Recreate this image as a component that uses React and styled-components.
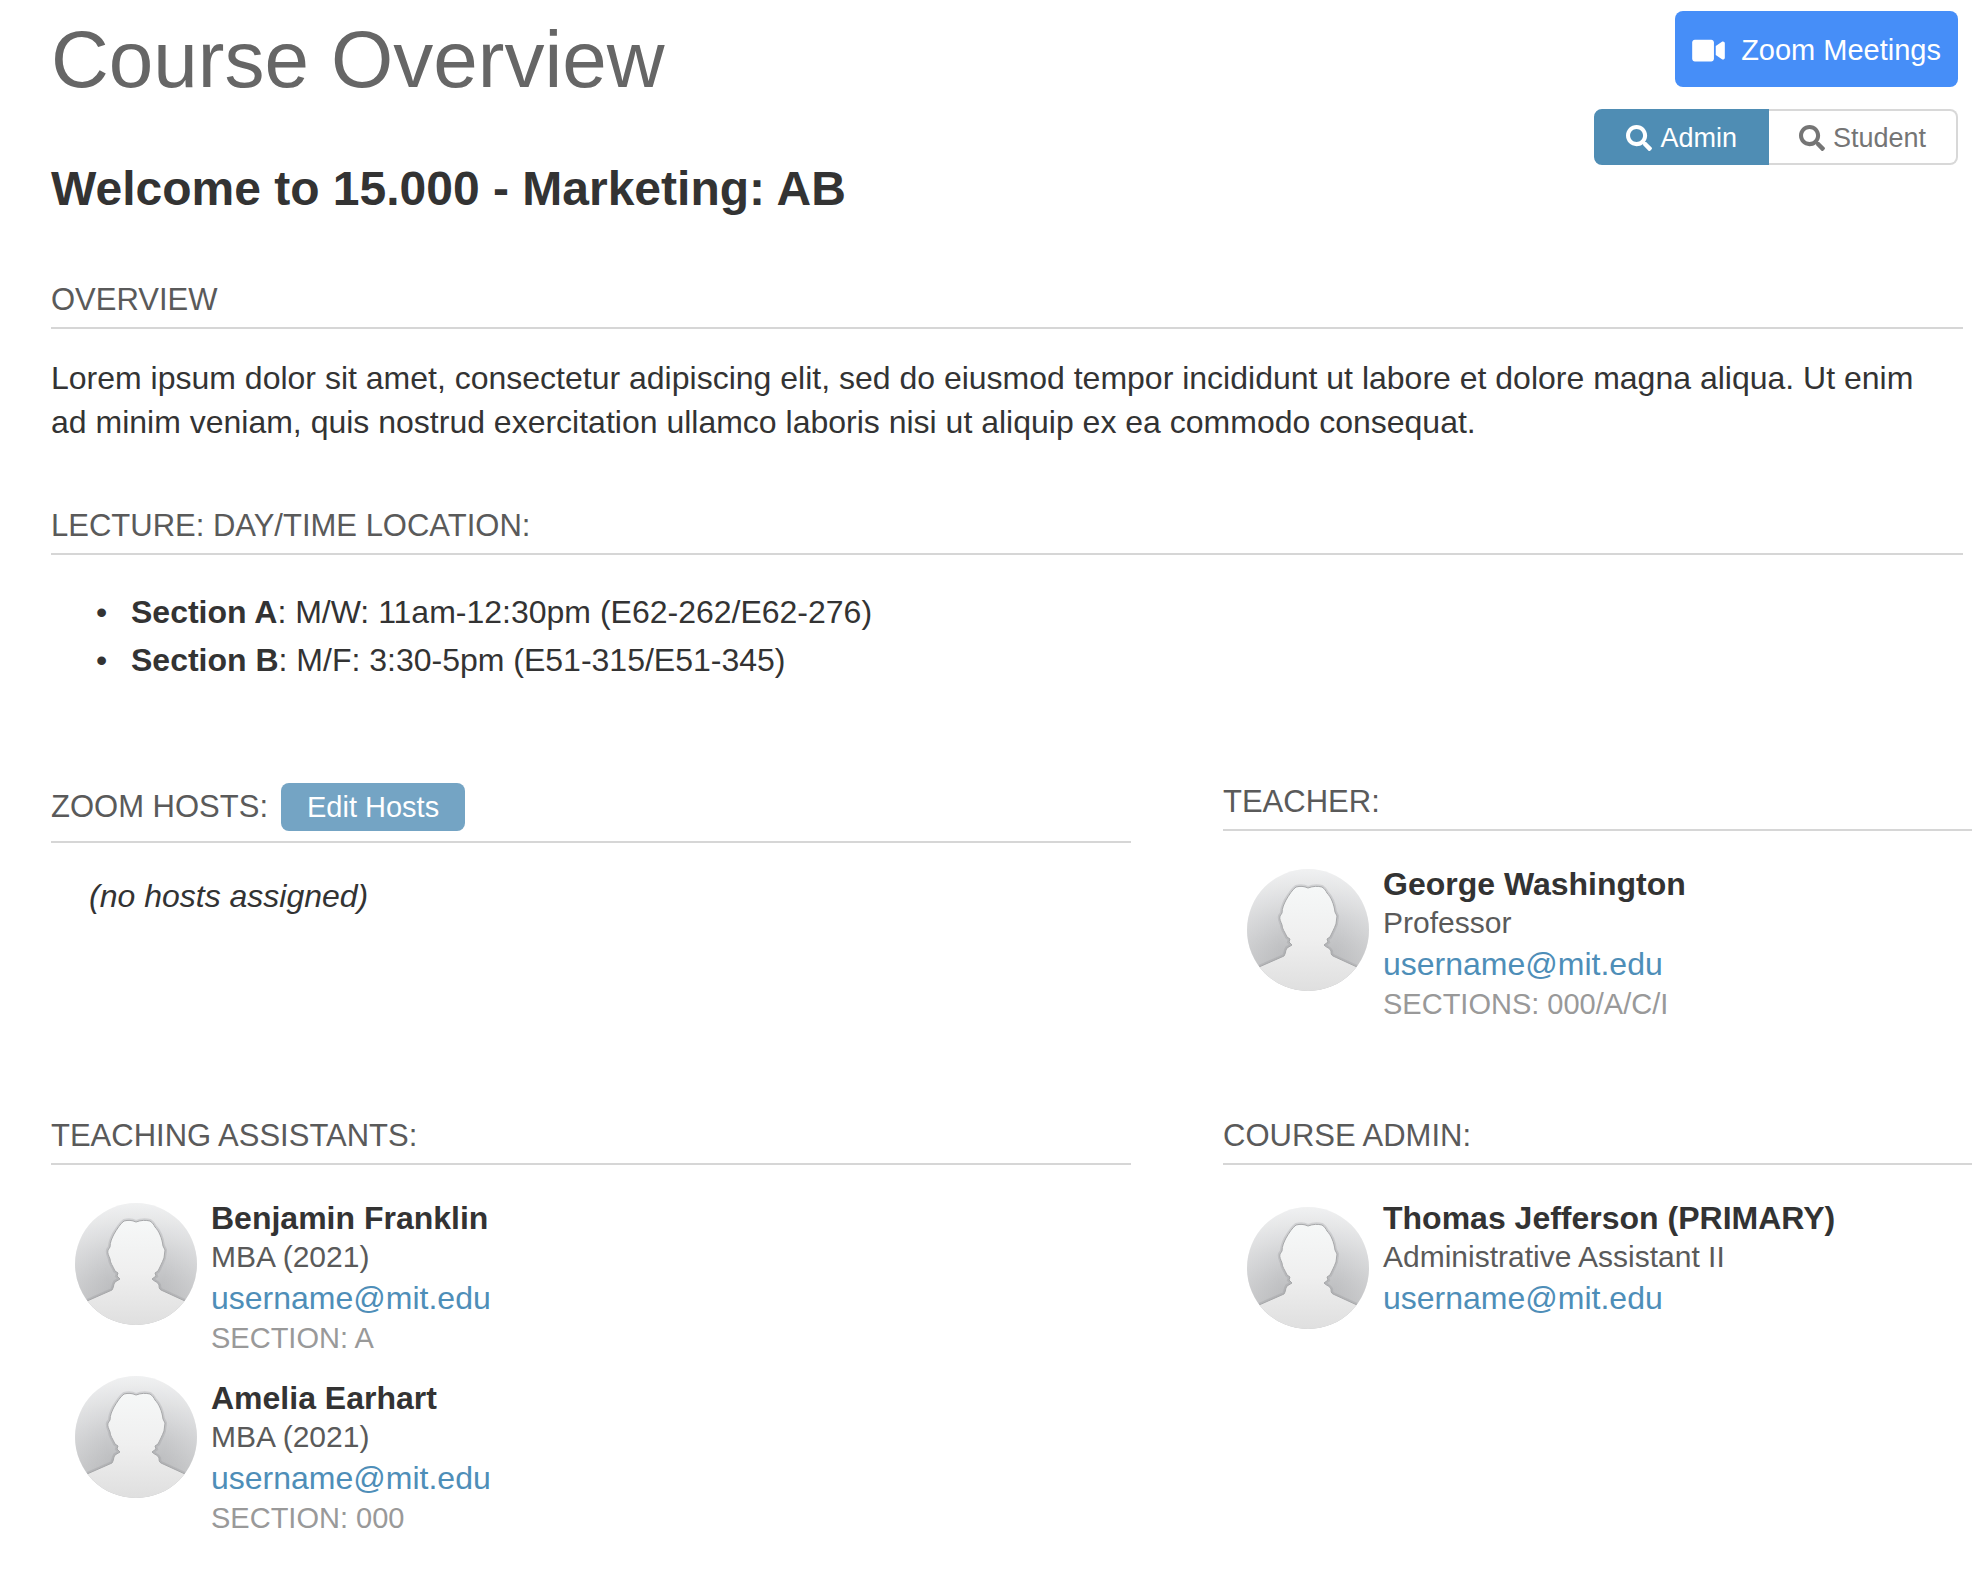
import { useId, useState } from "react";
import styled, { createGlobalStyle } from "styled-components";
import { FaSearch, FaVideo } from "react-icons/fa";

const GlobalStyle = createGlobalStyle`
  * {
    box-sizing: border-box;
  }
  body {
    margin: 0;
    background: #fff;
    color: #333;
    font-family: "Liberation Sans", Arial, Helvetica, sans-serif;
    font-size: 32px;
    line-height: 44px;
    overflow-x: hidden;
  }
  button {
    font-family: inherit;
    cursor: pointer;
  }
`;

const Page = styled.main`
  padding: 11px 0 64px 51px;
`;

const Header = styled.header`
  display: flex;
  justify-content: space-between;
  align-items: flex-start;
  padding-right: 14px;
`;

const Titles = styled.div`
  padding-top: 3px;
`;

const Title = styled.h1`
  margin: 0 0 54px;
  color: #666;
  font-size: 80px;
  font-weight: normal;
  line-height: 92px;
`;

const Welcome = styled.h2`
  margin: 0;
  font-size: 48px;
  line-height: 58px;
`;

const Actions = styled.div`
  display: flex;
  flex-direction: column;
  align-items: flex-end;
  gap: 22px;
`;

const ZoomButton = styled.button`
  display: flex;
  align-items: center;
  gap: 16px;
  height: 76px;
  padding: 2px 17px 0;
  border: none;
  border-radius: 8px;
  background: #468ef8;
  color: #fff;
  font-size: 29px;
`;

const VideoIcon = styled(FaVideo)`
  width: 33px;
  height: 29px;
`;

const ViewSwitch = styled.div`
  display: flex;
`;

const ViewButton = styled.button`
  display: flex;
  align-items: center;
  gap: 8px;
  height: 56px;
  padding: 2px 30px 0;
  border: 2px solid ${(props) => (props.$active ? "#4f8db4" : "#d8d8d8")};
  background: ${(props) => (props.$active ? "#4f8db4" : "#fff")};
  color: ${(props) => (props.$active ? "#fff" : "#757575")};
  font-size: 27px;

  &:first-child {
    border-radius: 8px 0 0 8px;
  }
  &:last-child {
    border-left: none;
    border-radius: 0 8px 8px 0;
  }
`;

const Section = styled.section`
  margin: 62px 9px 0 0;
`;

const Heading = styled.h3`
  margin: 0;
  padding-bottom: 7px;
  border-bottom: 2px solid #d6d6d6;
  color: #5a5a5a;
  font-size: 31px;
  font-weight: normal;
  line-height: 40px;
  text-transform: uppercase;
`;

const HostsHeader = styled.div`
  display: flex;
  align-items: center;
  gap: 13px;
  padding: 1px 0 10px;
  border-bottom: 2px solid #d6d6d6;
`;

const HostsHeading = styled(Heading)`
  padding: 0;
  border: none;
`;

const EditButton = styled.button`
  height: 48px;
  padding: 0 26px;
  border: none;
  border-radius: 8px;
  background: #74a4c4;
  color: #fff;
  font-size: 29px;
`;

const Text = styled.p`
  margin: 27px 0 0;
  padding-right: 16px;
`;

const LectureList = styled.ul`
  margin: 33px 0 0;
  padding-left: 45px;
  line-height: 48px;
  list-style: none;

  & li::before {
    content: "•";
    display: inline-block;
    width: 35px;
  }
`;

const Columns = styled.div`
  display: grid;
  grid-template-columns: 1080fr 749fr;
  column-gap: 92px;
  row-gap: 94px;
  margin-top: 98px;
`;

const NoHosts = styled.p`
  margin: 31px 0 0;
  padding-left: 38px;
  font-style: italic;
`;

const People = styled.ul`
  display: flex;
  flex-direction: column;
  gap: 20px;
  margin: 33px 0 0;
  padding: 0 0 0 24px;
  list-style: none;
`;

const Photo = styled.svg`
  flex: none;
  width: 122px;
  height: 122px;
  margin-top: ${(props) => (props.$short ? "9px" : "5px")};
`;

const Details = styled.div`
  display: flex;
  flex-direction: column;
  align-items: flex-start;
`;

const Person = styled.li`
  display: flex;
  align-items: flex-start;
  gap: 14px;

  & + & ${Photo} {
    margin-top: 0;
  }
  & + & ${Details} {
    margin-top: 2px;
  }
`;

const Name = styled.strong`
  line-height: 40px;
`;

const Role = styled.span`
  color: #5a5a5a;
  font-size: 30px;
  line-height: 38px;
`;

const Email = styled.a`
  color: #4e8eb8;
  text-decoration: none;
`;

const Sections = styled.span`
  color: #999;
  font-size: 29px;
  line-height: 36px;
  text-transform: uppercase;
`;

const lectures = [
  { name: "Section A", time: "M/W: 11am-12:30pm (E62-262/E62-276)" },
  { name: "Section B", time: "M/F: 3:30-5pm (E51-315/E51-345)" },
];

const teachers = [
  {
    name: "George Washington",
    role: "Professor",
    email: "username@mit.edu",
    sections: "Sections: 000/A/C/I",
  },
];

const assistants = [
  {
    name: "Benjamin Franklin",
    role: "MBA (2021)",
    email: "username@mit.edu",
    sections: "Section: A",
  },
  {
    name: "Amelia Earhart",
    role: "MBA (2021)",
    email: "username@mit.edu",
    sections: "Section: 000",
  },
];

const admins = [
  {
    name: "Thomas Jefferson (PRIMARY)",
    role: "Administrative Assistant II",
    email: "username@mit.edu",
  },
];

const silhouette =
  "M-4 105 L12 98 L37 87 C39 84 38 82 40 79 L45 76 L42 73 L43 70 L40 68 C38 63 35 60 35 56 C34 53 32 50 33 47 L35 44 C35 39 37 35 39 31 C42 26 45 21 49 18 C53 17 57 17 61 19 C66 17 71 17 75 18 C78 20 79 22 80 24 C84 28 87 35 88 43 L90 47 C90 50 89 52 89 55 C87 60 85 64 83 68 L80 70 L81 73 L77 76 C80 79 83 79 84 82 C84 84 84 86 86 87 L110 98 L126 105 V126 H-4 Z";

const Avatar = ({ short }) => {
  const id = useId();

  return (
    <Photo viewBox="0 0 122 122" aria-hidden="true" $short={short}>
      <defs>
        <linearGradient id={`${id}back`} x1="0" y1="0" x2="0" y2="1">
          <stop offset="0" stopColor="#ebeced" />
          <stop offset="0.4" stopColor="#d0d1d3" />
          <stop offset="0.8" stopColor="#b6b7b9" />
        </linearGradient>
        <radialGradient id={`${id}light`} cx="0.5" cy="0.55" r="0.6">
          <stop offset="0.4" stopColor="#fff" stopOpacity="0" />
          <stop offset="1" stopColor="#fff" stopOpacity="0.3" />
        </radialGradient>
        <linearGradient
          id={`${id}body`}
          gradientUnits="userSpaceOnUse"
          x1="0"
          y1="17"
          x2="0"
          y2="122"
        >
          <stop offset="0" stopColor="#f6f8f8" />
          <stop offset="0.5" stopColor="#efefef" />
          <stop offset="1" stopColor="#dfdfdf" />
        </linearGradient>
        <clipPath id={`${id}circle`}>
          <circle cx="61" cy="61" r="61" />
        </clipPath>
      </defs>
      <g clipPath={`url(#${id}circle)`}>
        <rect width="122" height="122" fill={`url(#${id}back)`} />
        <rect width="122" height="122" fill={`url(#${id}light)`} />
        <path
          d={silhouette}
          fill="none"
          stroke="#8e8f92"
          strokeOpacity="0.25"
          strokeWidth="4"
        />
        <path
          d={silhouette}
          fill={`url(#${id}body)`}
          stroke="#a6a7a9"
          strokeWidth="1"
        />
      </g>
    </Photo>
  );
};

const PeopleList = ({ people }) => {
  return (
    <People>
      {people.map((e) => {
        return (
          <Person key={e.name}>
            <Avatar short={!e.sections} />
            <Details>
              <Name>{e.name}</Name>
              <Role>{e.role}</Role>
              <Email href={`mailto:${e.email}`}>{e.email}</Email>
              {e.sections && <Sections>{e.sections}</Sections>}
            </Details>
          </Person>
        );
      })}
    </People>
  );
};

const App = () => {
  const [view, setView] = useState("Admin");

  return (
    <>
      <GlobalStyle />
      <Page>
        <Header>
          <Titles>
            <Title>Course Overview</Title>
            <Welcome>Welcome to 15.000 - Marketing: AB</Welcome>
          </Titles>
          <Actions>
            <ZoomButton type="button">
              <VideoIcon />
              Zoom Meetings
            </ZoomButton>
            <ViewSwitch role="group" aria-label="View as">
              {["Admin", "Student"].map((e) => (
                <ViewButton
                  key={e}
                  type="button"
                  $active={view === e}
                  aria-pressed={view === e}
                  onClick={() => setView(e)}
                >
                  <FaSearch size={26} />
                  {e}
                </ViewButton>
              ))}
            </ViewSwitch>
          </Actions>
        </Header>

        <Section>
          <Heading>Overview</Heading>
          <Text>
            Lorem ipsum dolor sit amet, consectetur adipiscing elit, sed do
            eiusmod tempor incididunt ut labore et dolore magna aliqua. Ut enim
            ad minim veniam, quis nostrud exercitation ullamco laboris nisi ut
            aliquip ex ea commodo consequat.
          </Text>
        </Section>

        <Section>
          <Heading>Lecture: Day/Time Location:</Heading>
          <LectureList>
            {lectures.map((e) => (
              <li key={e.name}>
                <strong>{e.name}</strong>: {e.time}
              </li>
            ))}
          </LectureList>
        </Section>

        <Columns>
          <section>
            <HostsHeader>
              <HostsHeading>Zoom Hosts:</HostsHeading>
              <EditButton type="button">Edit Hosts</EditButton>
            </HostsHeader>
            <NoHosts>(no hosts assigned)</NoHosts>
          </section>
          <section>
            <Heading>Teacher:</Heading>
            <PeopleList people={teachers} />
          </section>
          <section>
            <Heading>Teaching Assistants:</Heading>
            <PeopleList people={assistants} />
          </section>
          <section>
            <Heading>Course Admin:</Heading>
            <PeopleList people={admins} />
          </section>
        </Columns>
      </Page>
    </>
  );
};

export default App;
